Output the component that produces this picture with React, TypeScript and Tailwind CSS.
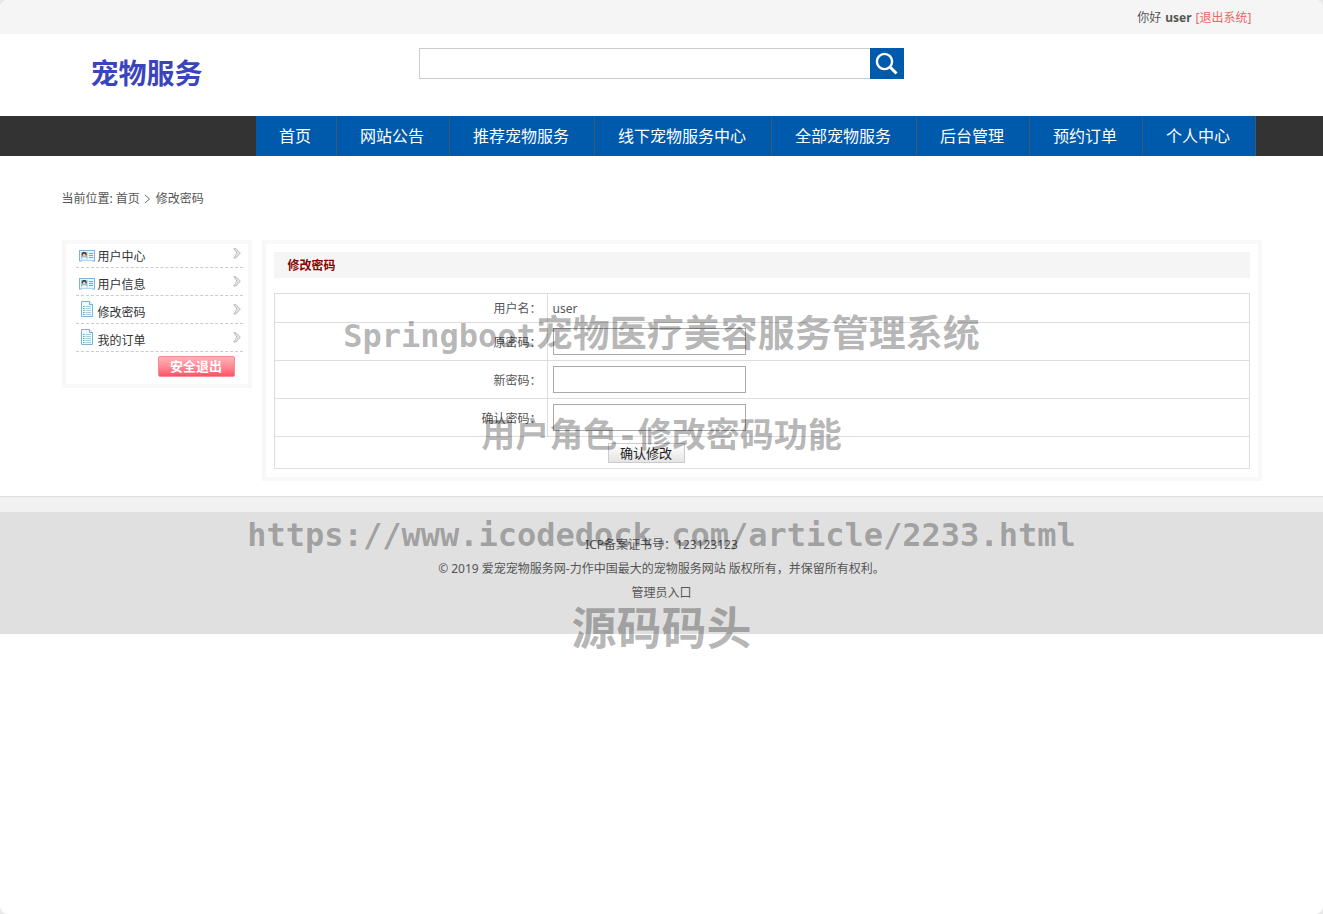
import React from 'react';

const NAV = ['首页', '网站公告', '推荐宠物服务', '线下宠物服务中心', '全部宠物服务', '后台管理', '预约订单', '个人中心'];

function CardIcon() {
  return (
    <svg width="16" height="12" viewBox="0 0 16 12" aria-hidden="true" className="mt-1 shrink-0">
      <rect x="0.5" y="0.5" width="15" height="10.5" fill="#e9f4fd" stroke="#7db4dc" />
      <path d="M3 11.500h10" stroke="#fff" />
      <rect x="2" y="2" width="6.500" height="7.500" fill="#8ec1e6" />
      <circle cx="5.200" cy="4.300" r="2.300" fill="#2f2a26" />
      <circle cx="5.200" cy="5.200" r="1.600" fill="#f1c79a" />
      <path d="M2.500 9.500c0-3 5.400-3 5.400 0z" fill="#fff" />
      <path d="M10 3.500h4M10 5.500h4M10 7.500h4" stroke="#6ea7d2" />
    </svg>
  );
}

function PageIcon() {
  return (
    <svg width="16" height="16" viewBox="0 0 16 16" aria-hidden="true" className="-mt-px shrink-0">
      <path d="M2.500 0.500h8l3 3v12h-11z" fill="#f1f8fe" stroke="#7fb3d6" />
      <path d="M10.500 0.500v3h3" fill="#fff" stroke="#6fa9cf" />
      <path d="M4 5.500h1.500M4 7.500h1.500M4 9.500h1.500M4 11.500h1.500M4 13.500h1.500" stroke="#5fa58a" />
      <path d="M6.500 5.500h5.500M6.500 7.500h5.500M6.500 9.500h5.500M6.500 11.500h5.500M6.500 13.500h5.500" stroke="#a5cdea" />
    </svg>
  );
}

function ArrowIcon() {
  return (
    <svg width="8" height="11" viewBox="0 0 8 11" aria-hidden="true" className="ml-auto shrink-0">
      <path d="M0.700 0.700h2.300l4.300 4.500-4.300 4.800H0.700l3.300-4.800z" fill="#e4e4e4" stroke="#b8b8b8" strokeWidth="0.900" />
    </svg>
  );
}

const MENU = [
  { label: '用户中心', icon: <CardIcon /> },
  { label: '用户信息', icon: <CardIcon /> },
  { label: '修改密码', icon: <PageIcon /> },
  { label: '我的订单', icon: <PageIcon /> },
];

const FIELDS = [
  { id: 'old', label: '原密码：' },
  { id: 'new', label: '新密码：' },
  { id: 'confirm', label: '确认密码：' },
];

function Watermark() {
  return (
    <div
      aria-hidden="true"
      className="pointer-events-none absolute inset-x-0 top-[305px] flex flex-col items-center whitespace-nowrap font-['DejaVu_Sans_Mono','Noto_Sans_CJK_SC',monospace] font-bold text-black/30"
    >
      <div className="h-[100px] text-[37px] leading-[60px]">
        <span className="text-[32px]">Springboot</span>宠物医疗美容服务管理系统
      </div>
      <div className="h-[100px] text-[34px] leading-[60px]">用户角色-修改密码功能</div>
      <div className="h-[95px] text-[32px] leading-[60px]">https://www.icodedock.com/article/2233.html</div>
      <div className="text-[45px] leading-[60px]">源码码头</div>
    </div>
  );
}

export default function App() {
  return (
    <div className="bg-[#e8e8e8]">
      <div className="relative min-h-screen overflow-hidden rounded-lg bg-white font-['Noto_Sans','Noto_Sans_CJK_SC',sans-serif] text-xs text-[#555]">
        <div className="bg-[#f5f5f5]">
          <div className="mx-auto flex h-[34px] max-w-[1200px] items-center justify-end gap-1 pr-[10px] pt-[2px]">
            <span>你好</span>
            <b>user</b>
            <a href="#logout" className="text-[#ee6565]">[退出系统]</a>
          </div>
        </div>

        <header className="mx-auto flex h-[82px] max-w-[1200px] items-start">
          <a href="#home" className="w-[357px] pl-[29px] pt-[19px] text-[28px] font-bold leading-10 text-[#3a45bd]">宠物服务</a>
          <form className="mt-[14px] flex h-[31px] w-[485px]" onSubmit={(e) => e.preventDefault()}>
            <input type="text" aria-label="搜索" className="min-w-0 flex-1 border border-r-0 border-[#ccc] px-2 outline-none" />
            <button type="submit" aria-label="搜索" className="w-[34px] bg-[#005aab]">
              <svg width="34" height="31" viewBox="0 0 34 31" fill="none" stroke="#fff">
                <circle cx="14.500" cy="13.500" r="7.600" strokeWidth="2.400" />
                <path d="M20 19l6.500 6.500" strokeWidth="3" />
              </svg>
            </button>
          </form>
        </header>

        <nav className="flex h-10 justify-center bg-[#333] pl-[189px]">
          <div className="flex bg-[#005aab] text-base text-white">
            {NAV.map((item) => (
              <a key={item} href="#nav" className="border-r border-[#3f5a70] pl-[23px] pr-[25px] leading-10">{item}</a>
            ))}
          </div>
        </nav>

        <div className="mx-auto flex max-w-[1200px] items-center pt-[33px] leading-5">
          <span>当前位置:&nbsp;</span>
          <a href="#home">首页</a>
          <svg width="7" height="10" viewBox="0 0 7 10" fill="none" stroke="#666" className="ml-1 mr-[5px] shrink-0" aria-hidden="true">
            <path d="M1 1l4.500 4-4.500 4" />
          </svg>
          <span>修改密码</span>
        </div>

        <main className="mx-auto flex max-w-[1200px] items-start gap-[10px] pb-[15px] pt-[31px]">
          <aside className="w-[190px] shrink-0 border-4 border-[#f8f8f8] px-[10px] pb-[7px] text-[#333]">
            <ul className="-mt-1 w-[167px]">
              {MENU.map((m, i) => (
                <li key={i} className="border-b border-dashed border-[#ccc]">
                  <a href="#menu" className="flex h-[27px] items-center gap-[3px] pl-[3px] pr-[2px]">
                    {m.icon}
                    <span className="pt-[6px] leading-5">{m.label}</span>
                    <ArrowIcon />
                  </a>
                </li>
              ))}
            </ul>
            <button type="button" className="ml-[82px] mt-1 block h-[21px] w-[77px] rounded-[2px] border border-[#f98a96] bg-linear-to-b from-[#ffb3b9] via-[#ff8a96] to-[#fd5165] text-[13px] font-bold leading-[19px] text-white">
              安全退出
            </button>
          </aside>

          <section className="min-w-0 flex-1 border-4 border-[#f8f8f8] p-2">
            <h1 className="bg-[#f5f5f5] px-[14px] pt-[2px] text-xs font-bold leading-6 text-[#8b0000]">修改密码</h1>
            <form onSubmit={(e) => e.preventDefault()}>
              <table className="mt-[15px] w-full border-collapse [&_td]:border [&_td]:border-[#ddd] [&_th]:border [&_th]:border-[#ddd]">
                <tbody>
                  <tr className="h-[29px]">
                    <th scope="row" className="w-[28%] pr-[5px] pt-[2px] text-right font-normal">用户名：</th>
                    <td className="px-[5px] pt-[2px]">user</td>
                  </tr>
                  {FIELDS.map((f) => (
                    <tr key={f.id} className="h-[38px]">
                      <th scope="row" className="pr-[5px] pt-[2px] text-right font-normal">
                        <label htmlFor={f.id}>{f.label}</label>
                      </th>
                      <td className="px-[5px]">
                        <input id={f.id} type="password" className="block h-[27px] w-[193px] border border-[#aaa] px-1 outline-none" />
                      </td>
                    </tr>
                  ))}
                  <tr className="h-[32px]">
                    <td colSpan={2} className="pl-[333px]">
                      <button type="submit" className="block h-5 w-[77px] border border-[#ccc] bg-linear-to-b from-white to-[#e4e4e4] text-[13px] leading-[18px] text-[#222]">
                        确认修改
                      </button>
                    </td>
                  </tr>
                </tbody>
              </table>
            </form>
          </section>
        </main>

        <footer className="border-t border-[#ddd] bg-[#f1f1f1] pt-[15px]">
          <div className="bg-[#e0e0e0] pb-[29px] pt-[21px] text-center leading-6">
            <p>ICP备案证书号：123123123</p>
            <p>© 2019 爱宠宠物服务网-力作中国最大的宠物服务网站 版权所有，并保留所有权利。</p>
            <p><a href="#admin">管理员入口</a></p>
          </div>
        </footer>

        <Watermark />
      </div>
    </div>
  );
}
